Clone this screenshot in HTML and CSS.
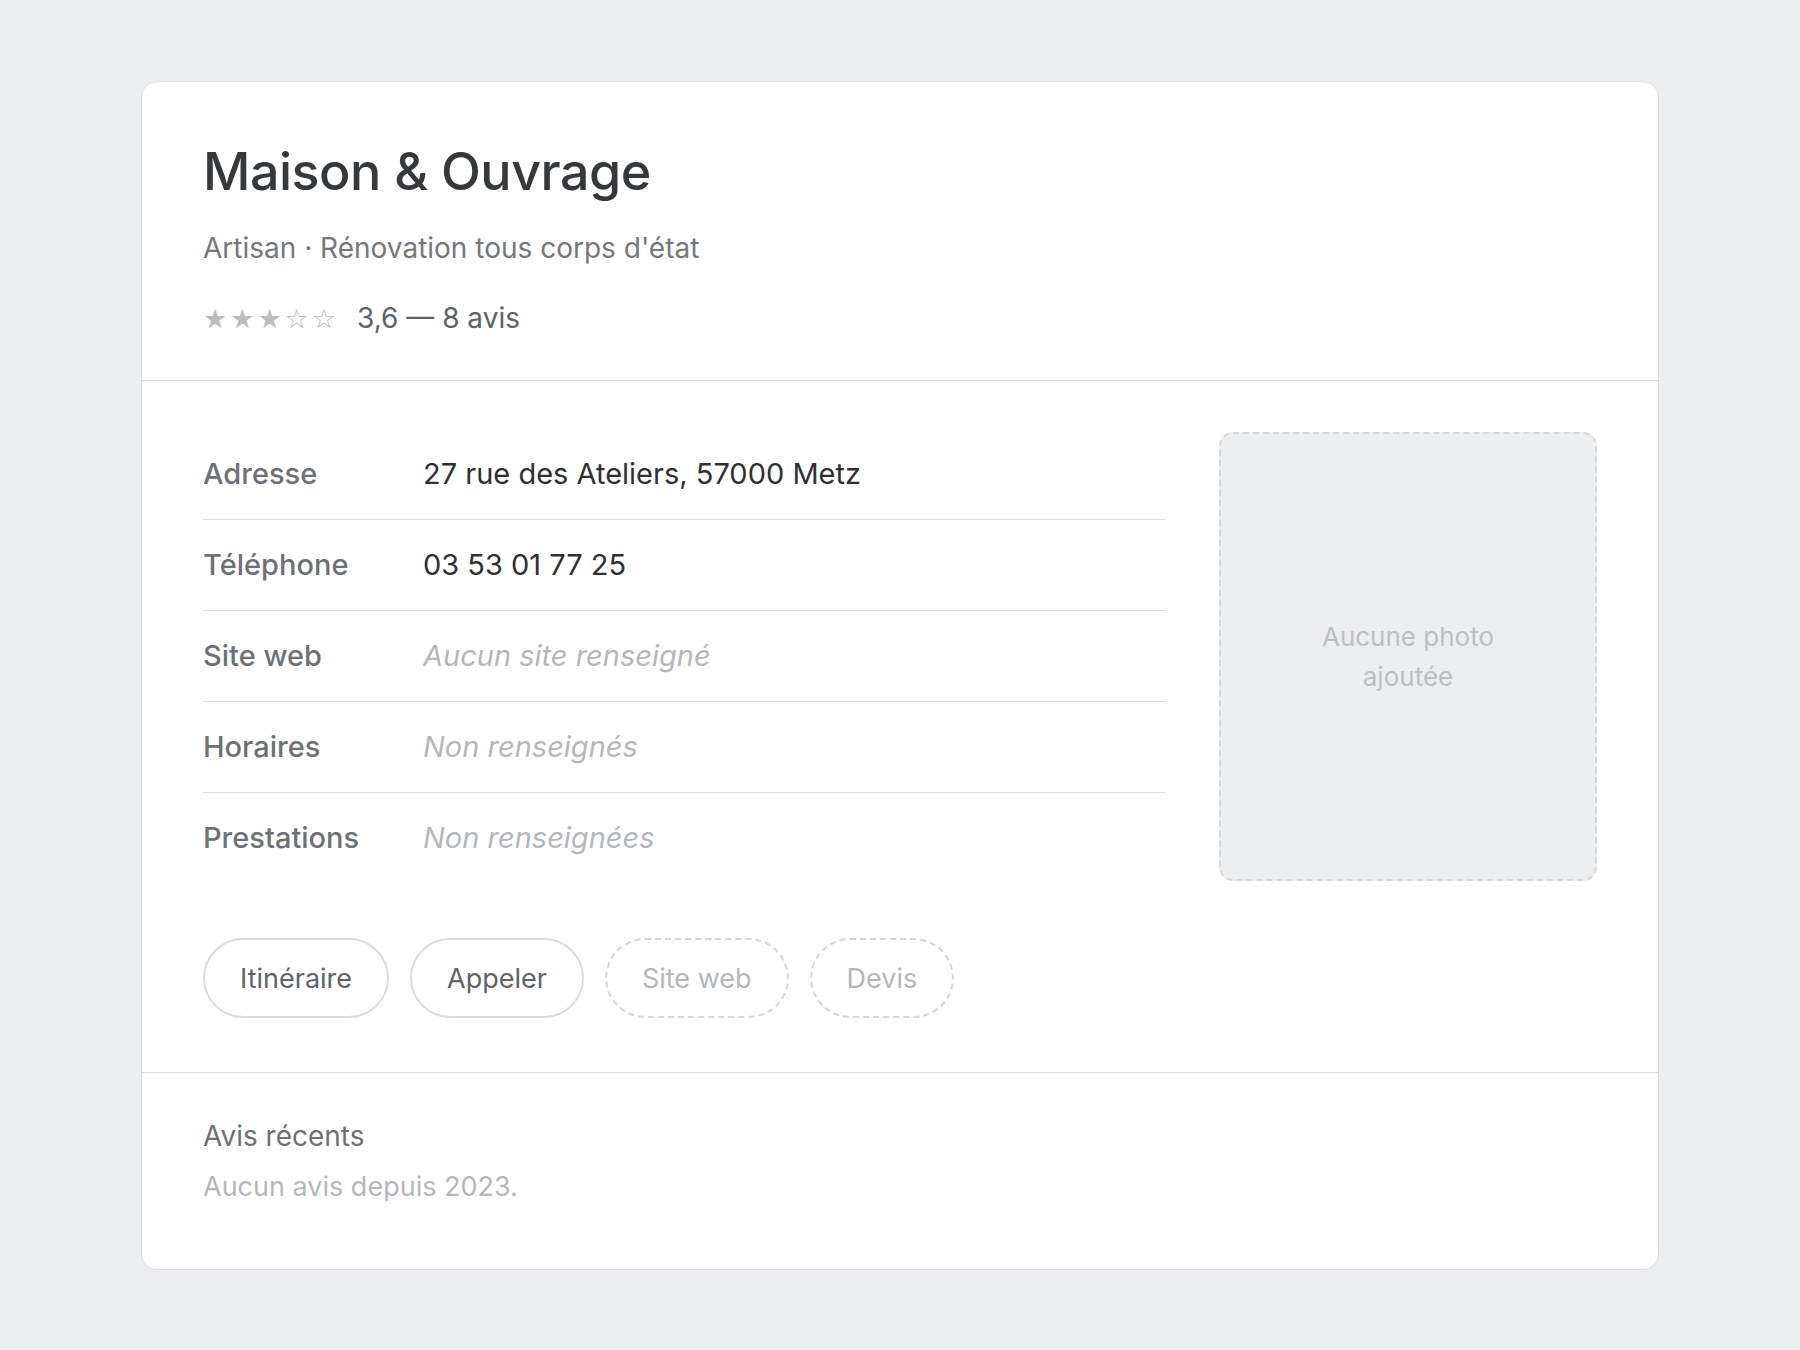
FILE: index.html
```html
<!DOCTYPE html>
<html lang="fr">
<head>
<meta charset="utf-8">
<title>Maison &amp; Ouvrage</title>
<link rel="stylesheet" href="styles.css">
</head>
<body>
<div class="card">
  <header class="head">
    <h1 class="title">Maison &amp; Ouvrage</h1>
    <p class="subtitle">Artisan · Rénovation tous corps d'état</p>
    <div class="rating">
      <span class="stars">★★★☆☆</span>
      <span class="score">3,6 — 8 avis</span>
    </div>
  </header>
  <section class="main">
    <div class="grid">
      <div class="info">
        <div class="row"><span class="label">Adresse</span><span class="value">27 rue des Ateliers, 57000 Metz</span></div>
        <div class="row"><span class="label">Téléphone</span><span class="value">03 53 01 77 25</span></div>
        <div class="row"><span class="label">Site web</span><span class="value empty">Aucun site renseigné</span></div>
        <div class="row"><span class="label">Horaires</span><span class="value empty">Non renseignés</span></div>
        <div class="row"><span class="label">Prestations</span><span class="value empty">Non renseignées</span></div>
      </div>
      <div class="photo"><span>Aucune photo<br>ajoutée</span></div>
    </div>
    <div class="actions">
      <button class="btn">Itinéraire</button>
      <button class="btn">Appeler</button>
      <button class="btn disabled">Site web</button>
      <button class="btn disabled">Devis</button>
    </div>
  </section>
  <footer class="reviews">
    <h2 class="rev-title">Avis récents</h2>
    <p class="rev-empty">Aucun avis depuis 2023.</p>
  </footer>
</div>
</body>
</html>
```
FILE: styles.css
```css
* { box-sizing: border-box; }
html, body { margin: 0; }
body {
  background: #edeef0;
  font-family: Inter, "Noto Sans", "Liberation Sans", sans-serif;
  padding: 81px 141px;
}
.card {
  background: #ffffff;
  border: 1px solid #d9dbde;
  border-radius: 16px;
}
.head {
  padding: 59px 61px 45px;
  border-bottom: 1px solid #dcdee1;
}
.title {
  margin: 0;
  font-size: 52px;
  line-height: 62px;
  font-weight: 500;
  color: #36393c;
  letter-spacing: -0.5px;
}
.subtitle {
  margin: 28px 0 0;
  font-size: 28px;
  line-height: 34px;
  color: #74787d;
}
.rating {
  margin-top: 36px;
  display: flex;
  align-items: center;
  height: 34px;
}
.stars {
  font-family: "DejaVu Sans", sans-serif;
  font-size: 27px;
  letter-spacing: 3px;
  color: #b9bcc1;
  margin-right: 18px;
}
.score {
  font-size: 28px;
  line-height: 34px;
  color: #5f6368;
}
.main {
  padding: 48px 61px 54px;
  border-bottom: 1px solid #dcdee1;
}
.grid {
  display: grid;
  grid-template-columns: 1fr 378px;
  column-gap: 53px;
}
.row {
  display: flex;
  align-items: center;
  padding: 30px 0;
  line-height: 30px;
  font-size: 29px;
  border-bottom: 1px solid #dcdee1;
}
.row:last-child { border-bottom: none; }
.label {
  width: 220px;
  flex: none;
  font-weight: 500;
  color: #6d7176;
}
.value { color: #2e3033; }
.value.empty {
  color: #b4b7bb;
  font-style: italic;
}
.photo {
  margin: 3px 0 2px;
  background: #edeef0;
  border: 2px dashed #d5d7da;
  border-radius: 14px;
  display: flex;
  align-items: center;
  justify-content: center;
  text-align: center;
  font-size: 26px;
  line-height: 40px;
  color: #bcbfc4;
}
.actions {
  display: flex;
  gap: 21px;
  margin-top: 55px;
}
.btn {
  font-family: inherit;
  height: 80px;
  padding: 0 35px;
  border: 2px solid #d9dbde;
  border-radius: 999px;
  background: #ffffff;
  font-size: 27px;
  color: #5e6368;
}
.btn.disabled {
  border-style: dashed;
  border-color: #d3d5d8;
  color: #b3b6bb;
}
.reviews {
  padding: 46px 61px 66px;
}
.rev-title {
  margin: 0;
  font-size: 28px;
  line-height: 34px;
  font-weight: 400;
  color: #6d7176;
}
.rev-empty {
  margin: 18px 0 0;
  font-size: 27px;
  line-height: 32px;
  color: #b4b7bb;
}
```
